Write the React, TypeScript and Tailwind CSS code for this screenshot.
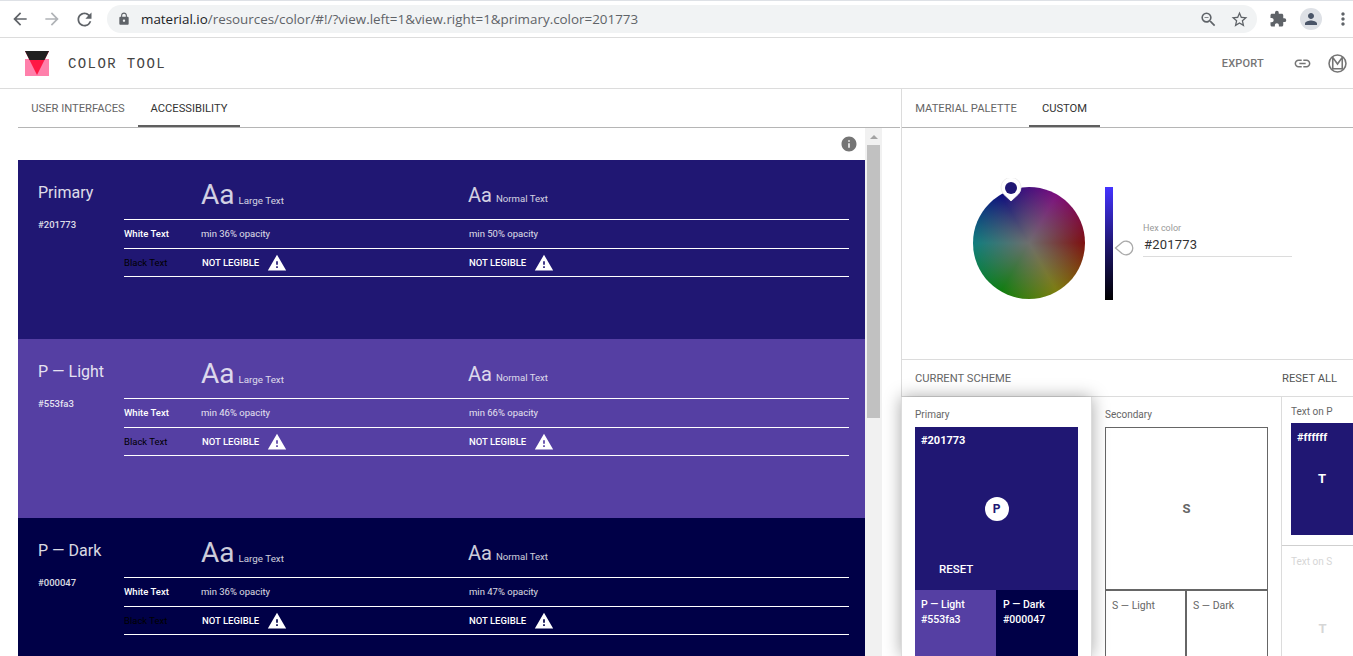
import { MdArrowBack, MdArrowForward, MdRefresh, MdLock, MdOutlineZoomOut, MdStarBorder, MdExtension, MdPerson, MdMoreVert, MdInfo, MdWarning, MdLink } from "react-icons/md";

const sections = [
  { name: "Primary", hex: "#201773", bg: "bg-[#201773]", large: "min 36% opacity", normal: "min 50% opacity" },
  { name: "P — Light", hex: "#553fa3", bg: "bg-[#553fa3]", large: "min 46% opacity", normal: "min 66% opacity" },
  { name: "P — Dark", hex: "#000047", bg: "bg-[#000047]", large: "min 36% opacity", normal: "min 47% opacity" },
];

const NotLegible = () => (
  <div className="ml-px flex items-center gap-2 text-[9.5px] font-medium text-white">
    NOT LEGIBLE
    <MdWarning className="text-[20px]" />
  </div>
);

const Section = ({ name, hex, bg, large, normal }: (typeof sections)[number]) => (
  <div className={`${bg} flex h-[179px] shrink-0 pl-5 pr-4 text-white`}>
    <div className="w-[86px] shrink-0">
      <div className="mt-[23px] text-[16px] leading-5 opacity-85">{name}</div>
      <div className="mt-[14px] text-[9.5px] font-medium leading-4 opacity-85">{hex}</div>
    </div>
    <div className="flex-1">
      <div className="grid h-[59px] grid-cols-[77px_267px_1fr] items-end">
        <div />
        <div className="flex items-baseline gap-1 pb-[8px] opacity-80">
          <span className="text-[28px] leading-8">Aa</span>
          <span className="text-[9.8px]">Large Text</span>
        </div>
        <div className="flex items-baseline gap-1 pb-[12px] opacity-80">
          <span className="text-[20px] leading-6">Aa</span>
          <span className="text-[9.6px]">Normal Text</span>
        </div>
      </div>
      <div className="grid h-[29px] grid-cols-[77px_267px_1fr] items-center border-t border-white text-[9.5px]">
        <div className="font-medium">White Text</div>
        <div className="opacity-85">{large}</div>
        <div className="ml-px opacity-85">{normal}</div>
      </div>
      <div className="grid h-[29px] grid-cols-[77px_267px_1fr] items-center border-y border-white pt-px text-[9.5px]">
        <div className="text-black">Black Text</div>
        <NotLegible />
        <NotLegible />
      </div>
    </div>
  </div>
);

const Tab = ({ label, active, width }: { label: string; active?: boolean; width: string }) => (
  <div
    className={`${width} flex h-full items-center justify-center border-b-2 pt-[4px] text-[11.2px] ${
      active ? "border-[#5f5f5f] text-[#333]" : "border-transparent text-[#666]"
    }`}
  >
    {label}
  </div>
);

const App = () => {
  return (
    <div className="flex h-[656px] w-[1353px] flex-col overflow-hidden bg-white font-['Roboto',sans-serif]">
      {/* browser bar */}
      <div className="flex h-[38px] shrink-0 items-center border-t border-b border-t-[#dee1e6] border-b-[#dcdcdc] pl-[10px] text-[#5f6368]">
        <MdArrowBack className="shrink-0 text-[20px]" />
        <MdArrowForward className="ml-[12px] shrink-0 text-[20px] text-[#b0b3b7]" />
        <MdRefresh className="ml-[12px] shrink-0 text-[21px]" />
        <div className="ml-[12px] flex h-[28px] w-[1150px] shrink-0 items-center rounded-full bg-[#f1f3f4] pl-[10px] pr-[8px]">
          <MdLock className="text-[14px]" />
          <div className="ml-[10px] font-['Open_Sans',sans-serif] text-[13.4px] text-[#5f6368]">
            <span className="text-[#202124]">material.io</span>/resources/color/#!/?view.left=1&view.right=1&primary.color=201773
          </div>
          <MdOutlineZoomOut className="ml-auto text-[19px]" />
          <MdStarBorder className="ml-[12px] text-[19px]" />
        </div>
        <MdExtension className="ml-[12px] shrink-0 text-[18px]" />
        <div className="ml-[13px] flex h-[22px] w-[22px] shrink-0 items-center justify-center rounded-full bg-[#dee1e6]">
          <MdPerson className="text-[18px] text-[#4a5568]" />
        </div>
        <MdMoreVert className="ml-[11px] shrink-0 text-[20px]" />
      </div>

      {/* app bar */}
      <div className="flex h-[51px] shrink-0 items-center border-b border-[#dcdcdc] pl-[25px] pr-[6px]">
        <svg width="24" height="25" viewBox="0 0 24 25">
          <rect x="0" y="8" width="24" height="17" fill="#ff80ab" />
          <polygon points="0,0 24,0 12,24" fill="#ff1744" />
          <polygon points="0,0 24,0 19.5,9 4.5,9" fill="#212121" />
        </svg>
        <div className="ml-[19px] mt-[2px] font-['Liberation_Mono',monospace] text-[14px] tracking-[1.4px] text-[#444]">COLOR TOOL</div>
        <div className="ml-auto mt-[2px] text-[11px] font-medium tracking-[0.2px] text-[#757575]">EXPORT</div>
        <MdLink className="ml-[29px] text-[19px] text-[#757575]" />
        <svg className="ml-[16px]" width="19" height="19" viewBox="0 0 18 18" fill="none" stroke="#757575" strokeWidth="1.5">
          <circle cx="9" cy="9" r="8" />
          <path d="M4 2.5 9 9.5 14 2.5M4.5 3V15M13.5 3V15M4.5 14H13.5" />
        </svg>
      </div>

      <div className="flex min-h-0 flex-1">
        {/* left panel */}
        <div className="flex w-[902px] shrink-0 flex-col border-r border-[#dcdcdc]">
          <div className="ml-[18px] mr-[1px] flex h-[39px] shrink-0 border-b border-[#b5b5b5]">
            <Tab label="USER INTERFACES" width="w-[120px]" />
            <Tab label="ACCESSIBILITY" width="w-[102px]" active />
          </div>
          <div className="flex min-h-0 flex-1 pl-[18px]">
            <div className="flex w-[847px] flex-col">
              <div className="flex h-[32px] shrink-0 items-start justify-end pt-[7px] pr-[7px]">
                <MdInfo className="text-[18px] text-[#757575]" />
              </div>
              {sections.map((s) => (
                <Section key={s.name} {...s} />
              ))}
            </div>
            <div className="flex w-[17px] flex-col items-center bg-[#f1f1f1]">
              <div className="mt-[7px] h-0 w-0 border-x-[4px] border-b-[4px] border-x-transparent border-b-[#a3a3a3]" />
              <div className="mt-[6px] h-[273px] w-[13px] bg-[#c1c1c1]" />
            </div>
          </div>
        </div>

        {/* right panel */}
        <div className="flex min-w-0 flex-1 flex-col">
          <div className="flex h-[39px] shrink-0 border-b border-[#b5b5b5] pl-[1px]">
            <Tab label="MATERIAL PALETTE" width="w-[126px]" />
            <Tab label="CUSTOM" width="w-[71px]" active />
          </div>

          {/* picker */}
          <div className="flex h-[232px] shrink-0 border-b border-[#dcdcdc] pl-[71px] pt-[59px]">
            <div className="relative h-[112px] w-[112px] rounded-full bg-[radial-gradient(circle,#6e6e6e_0%,transparent_82%),conic-gradient(from_30deg,#800080,#800000,#808000,#008000,#008080,#000080,#800080)]">
              <svg className="absolute left-[27px] top-[-9px]" width="22" height="24" viewBox="0 0 22 24">
                <path d="M11 23 3.5 16A10 10 0 1 1 18.5 16Z" fill="#fff" stroke="#eee" strokeWidth="1" />
                <circle cx="11" cy="10" r="6" fill="#201773" />
              </svg>
            </div>
            <div className="relative ml-[20px] h-[113px] w-[8px] bg-[linear-gradient(#4433ff,#201773_50%,#000)]">
              <svg className="absolute left-[9px] top-[52px]" width="20" height="18" viewBox="0 0 20 18">
                <path d="M1.5 9 8 3.5A6.8 6.8 0 1 1 8 14.5Z" fill="#fff" stroke="#aaa" strokeWidth="1.3" />
              </svg>
            </div>
            <div className="ml-[30px] mt-[36px] w-[149px]">
              <div className="text-[9px] leading-[10px] text-[#999]">Hex color</div>
              <div className="mt-[1px] h-[23px] border-b border-[#dcdcdc] pl-[1px] pt-px text-[13px] leading-[20px] tracking-[0.2px] text-[#333]">#201773</div>
            </div>
          </div>

          {/* scheme */}
          <div className="flex h-[37px] shrink-0 items-center justify-between border-b border-[#dcdcdc] pl-[13px] pr-[16px] pt-[2px] text-[11.2px] text-[#666]">
            <span>CURRENT SCHEME</span>
            <span className="text-[#555]">RESET ALL</span>
          </div>
          <div className="flex min-h-0 flex-1">
            <div className="relative z-10 -ml-px w-[191px] shrink-0 border-x border-[#dcdcdc] bg-white px-[13px] pt-[12px] shadow-[0_0_16px_rgba(0,0,0,0.35)]">
              <div className="pt-px text-[10px] leading-[10px] text-[#666]">Primary</div>
              <div className="relative mt-[7px] flex h-[163px] w-[163px] items-center justify-center bg-[#201773] text-white">
                <div className="absolute left-[6px] top-[6px] text-[11px] font-bold">#201773</div>
                <div className="flex h-6 w-6 items-center justify-center rounded-full bg-white text-[12px] font-bold text-[#201773]">P</div>
                <div className="absolute bottom-[12px] left-[24px] text-[11.5px] font-medium">RESET</div>
              </div>
              <div className="flex w-[163px] text-[10.5px] font-medium leading-[15px] text-white">
                <div className="h-[70px] w-[81px] bg-[#553fa3] pl-[6px] pt-[7px]">P — Light<br />#553fa3</div>
                <div className="h-[70px] w-[82px] bg-[#000047] pl-[7px] pt-[7px]">P — Dark<br />#000047</div>
              </div>
            </div>
            <div className="w-[190px] shrink-0 border-r border-[#dcdcdc] px-[13px] pt-[12px]">
              <div className="pt-px text-[10px] leading-[10px] text-[#666]">Secondary</div>
              <div className="mt-[7px] flex h-[163px] w-[163px] items-center justify-center border border-[#666] text-[13px] font-bold text-[#666]">S</div>
              <div className="flex w-[163px] text-[10.5px] text-[#666]">
                <div className="h-[70px] w-[81px] border border-[#666] pl-[6px] pt-[7px]">S — Light</div>
                <div className="h-[70px] w-[82px] border border-[#666] pl-[6px] pt-[7px]">S — Dark</div>
              </div>
            </div>
            <div className="flex min-w-0 flex-1 flex-col">
              <div className="h-[149px] shrink-0 border-b border-[#cfcfcf] pl-[9px] pt-[9px]">
                <div className="text-[10px] leading-[11px] text-[#666]">Text on P</div>
                <div className="relative mt-[6px] flex h-[112px] items-center justify-center bg-[#201773] text-[13px] font-bold text-white">
                  <div className="absolute left-[6px] top-[7px] text-[11px]">#ffffff</div>
                  T
                </div>
              </div>
              <div className="pl-[9px] pt-[10px] text-[#d6d6d6]">
                <div className="text-[10px] leading-[11px]">Text on S</div>
                <div className="mt-[52px] w-[63px] text-center text-[13px] font-bold">T</div>
              </div>
            </div>
          </div>
        </div>
      </div>
    </div>
  );
};

export default App;
